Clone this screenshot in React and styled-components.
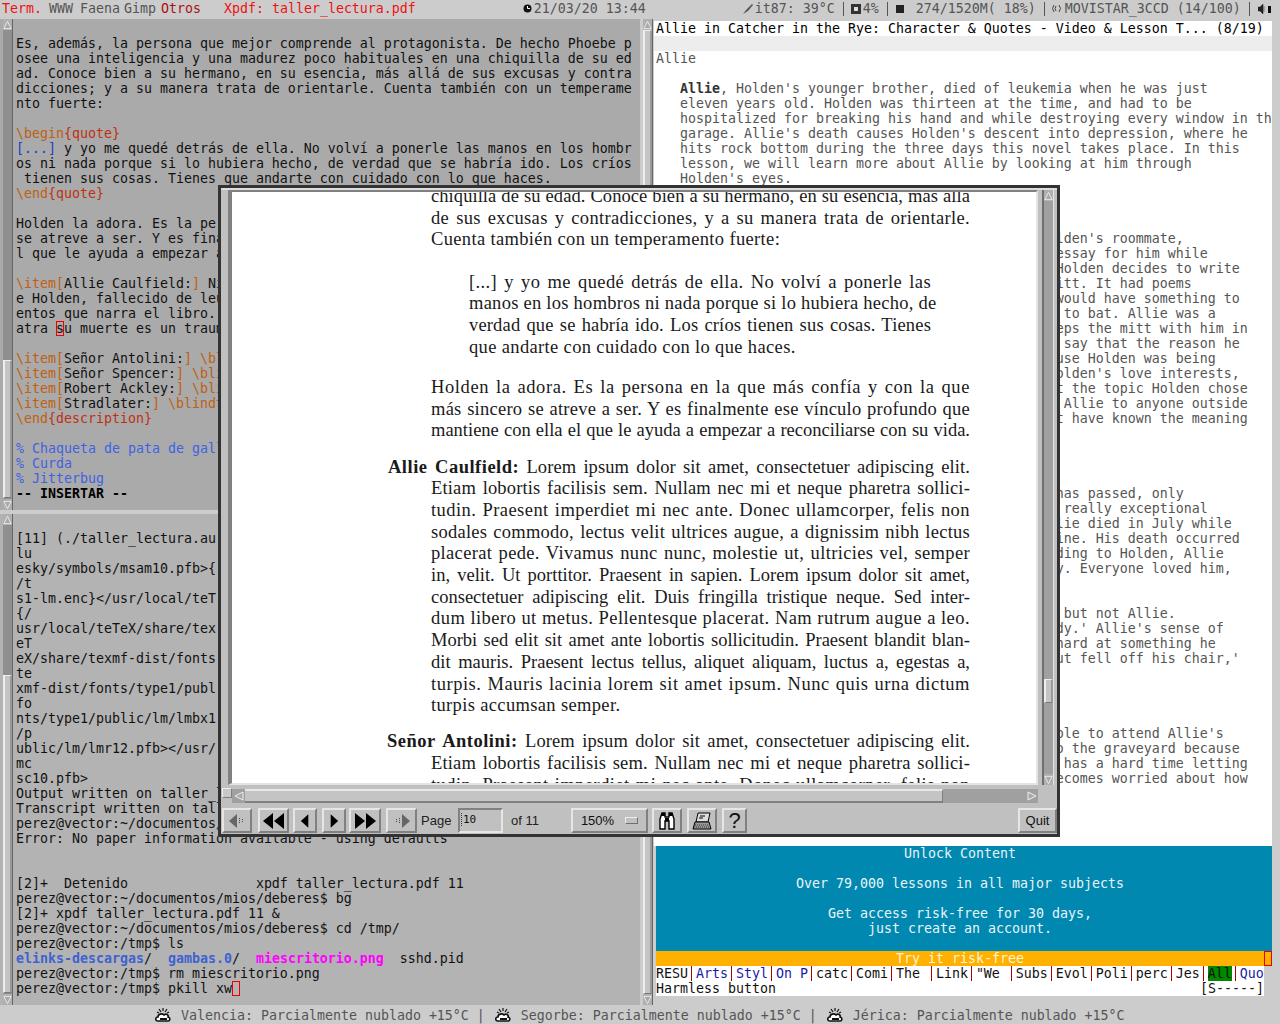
import React from 'react'
import styled, { createGlobalStyle } from 'styled-components'

const Global = createGlobalStyle`
  html, body { margin: 0; padding: 0; background: #cccccc; }
  #root { width: 1280px; height: 1024px; overflow: hidden; }
`

const MONO = `"DejaVu Sans Mono", monospace`

/*desktop*/
const Desktop = styled.div`
  position: relative;
  width: 1280px;
  height: 1024px;
  display: flex;
  flex-direction: column;
  background: #cccccc;
  overflow: hidden;
  font-family: ${MONO};
  font-size: 13.29px;
  line-height: 15px;
`
const TopBar = styled.div`
  height: 19px;
  flex: none;
  box-sizing: border-box;
  padding: 0 0 2px 2px;
  display: flex;
  align-items: center;
  color: #555555;
  white-space: pre;
`
const Tag = styled.span`
  color: ${p => p.$c || '#555555'};
  margin-left: ${p => p.$ml || 0}px;
  display: inline-flex;
  align-items: center;
`
const Pipe = styled.span`
  width: 1px;
  height: 14px;
  flex: none;
  margin-left: 8px;
  background: #555555;
`
const Columns = styled.div`
  flex: 1;
  display: flex;
  min-height: 0;
`
const LeftColumn = styled.div`
  width: 640px;
  flex: none;
  display: flex;
  flex-direction: column;
`
const Pane = styled.div`
  height: ${p => p.$h}px;
  flex: none;
  display: flex;
  background: ${p => p.$bg};
  margin-bottom: ${p => p.$mb || 0}px;
  overflow: hidden;
`
const RightColumn = styled.div`
  width: 640px;
  flex: none;
  display: flex;
`
const Code = styled.pre`
  margin: 0;
  padding-top: 17px;
  padding-left: 3px;
  font: inherit;
  color: #111111;
  white-space: pre;
  overflow: hidden;
  flex: 1;
`
const T = styled.span`
  color: ${p => p.$c};
  font-weight: ${p => (p.$b ? 'bold' : 'normal')};
`
const Cursor = styled.span`
  display: inline-block;
  width: 6px;
  height: 13px;
  vertical-align: -3px;
  border: 1px solid #ee0000;
  line-height: 13px;
`
const CursorOn = styled.span`
  outline: 1px solid #ee0000;
  outline-offset: -1px;
`

/*scrollbars*/
const Scroll = styled.div`
  width: 10px;
  flex: none;
  margin-left: 3px;
  display: flex;
  flex-direction: column;
  box-sizing: border-box;
  background: #8f8f8f;
  border-right: 1px solid #666666;
  height: ${p => p.$h}px;
`
const ScrollEnd = styled.div`
  height: 11px;
  flex: none;
  background: #b0b0b0;
  display: flex;
  align-items: center;
  justify-content: center;
`
const ScrollGap = styled.div`
  height: ${p => p.$h}px;
  flex: ${p => (p.$h ? 'none' : 1)};
`
const ScrollThumb = styled.div`
  height: ${p => p.$h}px;
  flex: none;
  background: #c4c4c4;
  border-top: 1px solid #eeeeee;
  border-left: 2px solid #eeeeee;
  border-right: 2px solid #9a9a9a;
  border-bottom: 1px solid #777777;
  box-sizing: border-box;
`
function Arrow({ up }) {
  return (
    <svg width="10" height="10" viewBox="0 0 10 10">
      <path d={up ? 'M5 1 L9 9 L1 9 Z' : 'M5 9 L9 1 L1 1 Z'} fill="#a8a8a8" stroke="#eeeeee" strokeWidth="1" />
    </svg>
  )
}
function ScrollBar({ h, gap, thumb }) {
  return (
    <Scroll $h={h}>
      <ScrollEnd><Arrow up /></ScrollEnd>
      <ScrollGap $h={gap} />
      <ScrollThumb $h={thumb} />
      <ScrollGap />
      <ScrollEnd><Arrow /></ScrollEnd>
    </Scroll>
  )
}

/*browser*/
const Browser = styled.div`
  width: 618px;
  margin-left: 1px;
  display: flex;
  flex-direction: column;
`
const TitleRow = styled.div`
  height: 15px;
  margin-top: 2px;
  background: #ffffff;
  color: #000000;
  padding-left: 2px;
  white-space: pre;
`
const Band = styled.div`
  height: 15px;
  background: #ededed;
`
const Article = styled.pre`
  margin: 0;
  height: 795px;
  padding-left: 2px;
  background: #ffffff;
  font: inherit;
  color: #555555;
  overflow: hidden;
`
const Promo = styled.div`
  height: 105px;
  margin-left: 2px;
  padding-right: 8px;
  background: #0088b0;
  color: #e8f4f8;
  text-align: center;
  white-space: pre;
`
const TryBar = styled.div`
  height: 15px;
  margin-left: 2px;
  padding-right: 8px;
  background: #ffb000;
  color: #fff4d8;
  text-align: center;
  position: relative;
`
const TryMark = styled.span`
  position: absolute;
  right: 0;
  top: 0;
  width: 8px;
  height: 15px;
  box-sizing: border-box;
  border: 1px solid #ee0000;
`
const TabRow = styled.div`
  height: 15px;
  width: 608px;
  margin-left: 2px;
  background: #ffffff;
  display: flex;
  white-space: pre;
`
const Tab = styled.span`
  color: ${p => (p.$link ? '#1a1aa8' : '#111111')};
  background: ${p => (p.$on ? '#008800' : 'transparent')};
`
const Sep = styled.span`
  width: 1px;
  margin: 0 4px 0 3px;
  flex: none;
  background: #aa0000;
`
const StatusRow = styled.div`
  height: 15px;
  width: 608px;
  margin-left: 2px;
  background: #ffffff;
  color: #111111;
  display: flex;
  justify-content: space-between;
`

/*status bar*/
const BottomBar = styled.div`
  height: 19px;
  flex: none;
  box-sizing: border-box;
  display: flex;
  align-items: center;
  padding: 1px 0 0 155px;
  color: #555555;
  white-space: pre;
`
const Weather = styled.span`
  display: inline-flex;
  align-items: center;
  margin-right: 10px;
  svg { margin-right: 10px; }
`
function Cloud() {
  return (
    <svg width="16" height="15" viewBox="0 0 16 15">
      <path d="M4 1 L6 4 M8 0 L8 3 M12 1 L10 4 M14 4 L12 5 M2 4 L4 5" stroke="#111" strokeWidth="1.2" fill="none" />
      <path d="M3 13 C0 13 0 9 3 9 C3 6 7 5 9 7 C11 5 14 7 13 9 C16 10 15 13 13 13 Z" fill="#fff" stroke="#111" strokeWidth="1.6" />
      <path d="M5 12 L12 12 L12 10 L5 10 Z" fill="#111" />
    </svg>
  )
}

/*xpdf window*/
const Xpdf = styled.div`
  position: absolute;
  left: 218px;
  top: 185px;
  width: 842px;
  height: 652px;
  box-sizing: border-box;
  border: 3px solid #333333;
  background: #c0c0c0;
  display: flex;
  flex-direction: column;
`
const ViewRow = styled.div`
  display: flex;
  height: 597px;
  flex: none;
  border-top: 2px solid #dddddd;
  padding-left: 7px;
`
const Sunken = styled.div`
  width: 810px;
  height: 595px;
  flex: none;
  box-sizing: border-box;
  border-top: 2px solid #808080;
  border-left: 4px solid #808080;
  border-right: 2px solid #e4e4e4;
  border-bottom: 2px solid #e4e4e4;
  background: #ffffff;
  overflow: hidden;
`
const VScroll = styled.div`
  width: 12px;
  height: 595px;
  margin-left: 4px;
  flex: none;
  display: flex;
  flex-direction: column;
  background: #a0a0a0;
  border-left: 2px solid #707070;
  border-right: 1px solid #e4e4e4;
  box-sizing: border-box;
`
const HScroll = styled.div`
  height: 14px;
  width: 816px;
  margin: 2px 0 0 1px;
  flex: none;
  display: flex;
  background: #c0c0c0;
`
const Sash = styled.div`
  width: 10px;
  height: 10px;
  flex: none;
  margin-top: -1px;
  box-sizing: border-box;
  background: #c8c8c8;
  border: 1px solid;
  border-color: #eeeeee #808080 #808080 #eeeeee;
`
const HEnd = styled.div`
  width: 13px;
  flex: none;
  background: #a0a0a0;
  display: flex;
  align-items: center;
  justify-content: center;
`
const HThumb = styled.div`
  width: 698px;
  flex: none;
  box-sizing: border-box;
  background: #c4c4c4;
  border-top: 2px solid #e8e8e8;
  border-bottom: 2px solid #808080;
  border-right: 1px solid #808080;
`
const HRest = styled.div`
  flex: 1;
  background: #a0a0a0;
`
const Toolbar = styled.div`
  flex: 1;
  display: flex;
  align-items: center;
  padding: 4px 0 0 1px;
`
const Btn = styled.button`
  width: ${p => p.$w}px;
  height: 25px;
  flex: none;
  padding: 0;
  margin: 0 0 0 ${p => p.$ml || 0}px;
  box-sizing: border-box;
  background: #c0c0c0;
  border: 2px solid;
  border-color: #e6e6e6 #808080 #808080 #e6e6e6;
  font-family: "Liberation Sans", sans-serif;
  font-size: ${p => p.$fs || 13}px;
  color: #111111;
  display: flex;
  align-items: center;
  justify-content: center;
`
const Label = styled.span`
  font-family: "Liberation Sans", sans-serif;
  font-size: 13px;
  color: #222222;
  flex: none;
  width: ${p => p.$w}px;
  margin-left: ${p => p.$ml || 0}px;
`
const PageInput = styled.div`
  width: 45px;
  height: 25px;
  flex: none;
  box-sizing: border-box;
  border: 2px solid;
  border-color: #808080 #e6e6e6 #e6e6e6 #808080;
  font-family: ${MONO};
  font-size: 11px;
  line-height: 19px;
  padding-left: 1px;
  color: #111111;
  span {
    border-left: 1px dotted #333333;
    padding-left: 1px;
  }
`
const ZoomMark = styled.span`
  width: 11px;
  height: 5px;
  margin-left: 11px;
  background: #c0c0c0;
  border: 1px solid;
  border-color: #eeeeee #707070 #707070 #eeeeee;
`

/*pdf text*/
const PdfPage = styled.div`
  width: 804px;
  margin-top: -6px;
  font-family: "Liberation Serif", serif;
  font-size: 18.5px;
  line-height: 21.7px;
  color: #1a1a1a;
`
const Para = styled.div`
  margin-top: ${p => p.$mt || 0}px;
  margin-left: ${p => p.$ml}px;
  width: ${p => p.$w}px;
`
const Line = styled.div`
  white-space: nowrap;
  text-align: justify;
  text-align-last: ${p => (p.$last ? 'left' : 'justify')};
  margin-left: ${p => p.$hang || 0}px;
  letter-spacing: ${p => p.$ls}px;
`
const Lead = styled.b`
  letter-spacing: 0.5px;
`

// Computer Modern runs wider than Liberation Serif: spread short lines a little
function L({ t, w = 539, last }) {
  const ls = last ? 0.35 : Math.max(0, Math.min(0.6, (w / t.length - 7.5) * 0.8))
  return <Line $ls={ls.toFixed(2)} $last={last}>{t}</Line>
}

const vim = (
  <>
    {`Es, además, la persona que mejor comprende al protagonista. De hecho Phoebe p
osee una inteligencia y una madurez poco habituales en una chiquilla de su ed
ad. Conoce bien a su hermano, en su esencia, más allá de sus excusas y contra
dicciones; y a su manera trata de orientarle. Cuenta también con un temperame
nto fuerte:

`}
    <T $c="#c06010">{'\\begin'}</T><T $c="#c03010">{'{quote}'}</T>{`
`}
    <T $c="#2040c0">[...]</T>{` y yo me quedé detrás de ella. No volví a ponerle las manos en los hombr
os ni nada porque si lo hubiera hecho, de verdad que se habría ido. Los críos
 tienen sus cosas. Tienes que andarte con cuidado con lo que haces.
`}
    <T $c="#c06010">{'\\end'}</T><T $c="#c03010">{'{quote}'}</T>{`

Holden la adora. Es la persona en la que más confía y con la que más sincero
se atreve a ser. Y es finalmente ese vínculo profundo que mantiene con ella e
l que le ayuda a empezar a reconciliarse con su vida.

`}
    <T $c="#c06010">{'\\item'}</T><T $c="#c06010">[</T>Allie Caulfield:<T $c="#c06010">]</T>{` Niño pequeño y hermano d
e Holden, fallecido de leucemia antes de los acontecimi
entos que narra el libro.
atra `}<CursorOn>s</CursorOn>{`u muerte es un trauma.

`}
    <T $c="#c06010">{'\\item'}</T><T $c="#c06010">[</T>Señor Antolini:<T $c="#c06010">]</T> <T $c="#c06010">{'\\blindtext'}</T>{`
`}
    <T $c="#c06010">{'\\item'}</T><T $c="#c06010">[</T>Señor Spencer:<T $c="#c06010">]</T> <T $c="#c06010">{'\\blindtext'}</T>{`
`}
    <T $c="#c06010">{'\\item'}</T><T $c="#c06010">[</T>Robert Ackley:<T $c="#c06010">]</T> <T $c="#c06010">{'\\blindtext'}</T>{`
`}
    <T $c="#c06010">{'\\item'}</T><T $c="#c06010">[</T>Stradlater:<T $c="#c06010">]</T> <T $c="#c06010">{'\\blindtext'}</T>{`
`}
    <T $c="#c06010">{'\\end'}</T><T $c="#c03010">{'{description}'}</T>{`

`}
    <T $c="#3f62e0">{`% Chaqueta de pata de gallo
% Curda
% Jitterbug`}</T>{`
`}
    <T $c="#000000" $b>-- INSERTAR --</T>
  </>
)

const terminal = (
  <>
    {`[11] (./taller_lectura.au
lu
esky/symbols/msam10.pfb>{
/t
s1-lm.enc}</usr/local/teT
{/
usr/local/teTeX/share/tex
eT
eX/share/texmf-dist/fonts
te
xmf-dist/fonts/type1/publ
fo
nts/type1/public/lm/lmbx1
/p
ublic/lm/lmr12.pfb></usr/
mc
sc10.pfb>
Output written on taller_lectura.pdf
Transcript written on taller_lectura.log
perez@vector:~/documentos/mios/deberes$ xpdf
Error: No paper information available - using defaults


[2]+  Detenido                xpdf taller_lectura.pdf 11
perez@vector:~/documentos/mios/deberes$ bg
[2]+ xpdf taller_lectura.pdf 11 &
perez@vector:~/documentos/mios/deberes$ cd /tmp/
perez@vector:/tmp$ ls
`}
    <T $c="#3f62d0" $b>elinks-descargas</T>{'/  '}
    <T $c="#3f62d0" $b>gambas.0</T>{'/  '}
    <T $c="#ff00ff" $b>miescritorio.png</T>{`  sshd.pid
perez@vector:/tmp$ rm miescritorio.png
perez@vector:/tmp$ pkill xw`}
    <Cursor />
  </>
)

// lines whose start is hidden by the xpdf window, col counted from the indent
const tail = (col, text) => ' '.repeat(col + 3) + text

const bodyText = [
  '   eleven years old. Holden was thirteen at the time, and had to be',
  '   hospitalized for breaking his hand and while destroying every window in the',
  "   garage. Allie's death causes Holden's descent into depression, where he",
  '   hits rock bottom during the three days this novel takes place. In this',
  '   lesson, we will learn more about Allie by looking at him through',
  "   Holden's eyes.",
  '', '', '',
  tail(47, "lden's roommate,"),
  tail(47, 'essay for him while'),
  tail(47, 'Holden decides to write'),
  tail(47, 'itt. It had poems'),
  tail(47, 'would have something to'),
  tail(48, 'to bat. Allie was a'),
  tail(47, 'eps the mitt with him in'),
  tail(48, 'say that the reason he'),
  tail(47, 'use Holden was being'),
  tail(47, "olden's love interests,"),
  tail(47, 't the topic Holden chose'),
  tail(48, 'Allie to anyone outside'),
  tail(47, 't have known the meaning'),
  '', '', '', '',
  tail(47, 'has passed, only'),
  tail(48, 'really exceptional'),
  tail(47, 'lie died in July while'),
  tail(47, 'ine. His death occurred'),
  tail(47, 'ding to Holden, Allie'),
  tail(47, 'y. Everyone loved him,'),
  '', '',
  tail(48, 'but not Allie.'),
  tail(47, "dy.' Allie's sense of"),
  tail(47, 'hard at something he'),
  tail(47, "ut fell off his chair,'"),
  '', '', '', '',
  tail(47, "ble to attend Allie's"),
  tail(47, 'o the graveyard because'),
  tail(48, 'has a hard time letting'),
  tail(47, 'ecomes worried about how'),
]

const tabs = [
  ['RESU'], ['Arts', 1], ['Styl', 1], ['On P', 1], ['catc'], ['Comi'], ['The '], ['Link'],
  ['"We '], ['Subs'], ['Evol'], ['Poli'], ['perc'], ['Jes'], ['All', 0, 1], ['Quo', 1],
]

function Triangles({ kind }) {
  // toolbar arrows, drawn on a 24x20 box
  const shapes = {
    first: (
      <>
        <path d="M4 10 L12 3 L12 17 Z" fill="#666" />
        <path d="M14.5 7 V13 M17.5 8 V12" stroke="#444" strokeDasharray="1 1" />
      </>
    ),
    rew: <path d="M1 10 L11 2 L11 18 Z M12 10 L22 2 L22 18 Z" fill="#000" />,
    prev: <path d="M7 10 L16 2 L16 18 Z" fill="#000" />,
    next: <path d="M8 2 L17 10 L8 18 Z" fill="#000" />,
    ff: <path d="M2 2 L12 10 L2 18 Z M13 2 L23 10 L13 18 Z" fill="#000" />,
    last: (
      <>
        <path d="M6.5 8 V12 M9.5 7 V13" stroke="#444" strokeDasharray="1 1" />
        <path d="M12 3 L20 10 L12 17 Z" fill="#666" />
      </>
    ),
  }
  return <svg width="24" height="20" viewBox="0 0 24 20">{shapes[kind]}</svg>
}

function Binoculars() {
  return (
    <svg width="20" height="20" viewBox="0 0 20 20">
      <path d="M3 8 L5 2 H8 V6 H12 V2 H15 L17 8 V18 H12 V10 H8 V18 H3 Z" fill="#fff" stroke="#000" strokeWidth="1.4" />
      <path d="M4 2 H8 V5 H4 Z M12 2 H16 V5 H12 Z M8 7 H12 V10 H8 Z" fill="#000" />
    </svg>
  )
}

function Printer() {
  return (
    <svg width="20" height="20" viewBox="0 0 20 20">
      <path d="M6 2 H18 L16 11 H4 Z" fill="#ddd" stroke="#000" />
      <path d="M8 5 H13 M7 7 H11" stroke="#000" />
      <path d="M3 11 H17 L19 18 H1 Z" fill="#999" stroke="#000" />
      <path d="M3 14 H17 M2 16 H18" stroke="#333" strokeDasharray="1 1" />
    </svg>
  )
}

function App() {
  return (
    <Desktop>
      <Global />
      <TopBar>
        <Tag $c="#ee1111">Term.</Tag>
        <Tag $ml={7}>WWW</Tag>
        <Tag $ml={7}>Faena</Tag>
        <Tag $ml={4}>Gimp</Tag>
        <Tag $c="#aa1010" $ml={5}>Otros</Tag>
        <Tag $c="#ee1111" $ml={23}>Xpdf: taller_lectura.pdf</Tag>
        <Tag $c="#111111" $ml={107}>
          <svg width="9" height="9" viewBox="0 0 9 9"><circle cx="4.5" cy="4.5" r="4" fill="#111" /><path d="M4.5 2 V4.5 H7" stroke="#fff" fill="none" /></svg>
        </Tag>
        <Tag $ml={2}>21/03/20 13:44</Tag>
        <Tag $c="#333333" $ml={96}>
          <svg width="12" height="12" viewBox="0 0 12 12"><path d="M1 11 L4 7 L10 1 L11 2 L6 8 Z" fill="#555" /></svg>
        </Tag>
        <Tag $ml={1}>it87: 39°C</Tag>
        <Pipe />
        <Tag $ml={7}>
          <svg width="10" height="10" viewBox="0 0 10 10"><rect width="10" height="10" fill="#333" /><rect x="3" y="3" width="4" height="4" fill="#ddd" /></svg>
        </Tag>
        <Tag $ml={2}>4%</Tag>
        <Pipe />
        <Tag $ml={8}>
          <svg width="8" height="10" viewBox="0 0 8 10"><rect y="1" width="8" height="8" fill="#222" /></svg>
        </Tag>
        <Tag $ml={12}>274/1520M( 18%)</Tag>
        <Pipe />
        <Tag $ml={7}>
          <svg width="9" height="9" viewBox="0 0 9 9"><path d="M2 1 L0.5 4.5 L2 8 M4 2 L3 4.5 L4 7 M7 1 L8.5 4.5 L7 8" stroke="#444" fill="none" /></svg>
        </Tag>
        <Tag $ml={4}>MOVISTAR_3CCD (14/100)</Tag>
        <Pipe />
        <Tag $c="#111111" $ml={8}>
          <svg width="14" height="10" viewBox="0 0 14 10"><path d="M0 3 H2 L5 0 V10 L2 7 H0 Z M6 2 V8" fill="#222" stroke="#222" strokeWidth="0.5" /><rect x="10" y="2" width="3" height="7" fill="#111" /></svg>
        </Tag>
      </TopBar>

      <Columns>
        <LeftColumn>
          <Pane $h={491} $bg="#aaaaaa" $mb={4}>
            <ScrollBar h={491} gap={330} thumb={138} />
            <Code>{vim}</Code>
          </Pane>
          <Pane $h={491} $bg="#b3b3b3">
            <ScrollBar h={491} gap={150} thumb={318} />
            <Code>{terminal}</Code>
          </Pane>
        </LeftColumn>
        <RightColumn>
          <ScrollBar h={986} gap={0} thumb={964} />
          <Browser>
            <TitleRow>Allie in Catcher in the Rye: Character &amp; Quotes - Video &amp; Lesson T... (8/19)</TitleRow>
            <Band />
            <Article>
              {'Allie\n\n   '}
              <T $c="#333333" $b>Allie</T>
              {", Holden's younger brother, died of leukemia when he was just\n"}
              {bodyText.join('\n')}
            </Article>
            <Promo>
              {'Unlock Content\n\nOver 79,000 lessons in all major subjects\n\nGet access risk-free for 30 days,\njust create an account.'}
            </Promo>
            <TryBar>Try it risk-free<TryMark /></TryBar>
            <TabRow>
              {tabs.map(([label, link, on], i) => (
                <React.Fragment key={i}>
                  <Tab $link={link} $on={on}>{label}</Tab>
                  {i < tabs.length - 1 && <Sep />}
                </React.Fragment>
              ))}
            </TabRow>
            <StatusRow>
              <span>Harmless button</span>
              <span>[S-----]</span>
            </StatusRow>
          </Browser>
        </RightColumn>
      </Columns>

      <BottomBar>
        <Weather><Cloud />Valencia: Parcialmente nublado +15°C |</Weather>
        <Weather><Cloud />Segorbe: Parcialmente nublado +15°C |</Weather>
        <Weather><Cloud />Jérica: Parcialmente nublado +15°C</Weather>
      </BottomBar>

      <Xpdf>
        <ViewRow>
          <Sunken>
            <PdfPage>
              <Para $ml={199} $w={539}>
                <L t="chiquilla de su edad. Conoce bien a su hermano, en su esencia, más allá" />
                <L t="de sus excusas y contradicciones, y a su manera trata de orientarle." />
                <L t="Cuenta también con un temperamento fuerte:" last />
              </Para>
              <Para $ml={237} $w={462} $mt={20.5}>
                <L w={462} t="[...] y yo me quedé detrás de ella. No volví a ponerle las" />
                <L w={462} t="manos en los hombros ni nada porque si lo hubiera hecho, de" />
                <L w={462} t="verdad que se habría ido. Los críos tienen sus cosas. Tienes" />
                <L w={462} t="que andarte con cuidado con lo que haces." last />
              </Para>
              <Para $ml={199} $w={539} $mt={18.5}>
                <L t="Holden la adora. Es la persona en la que más confía y con la que" />
                <L t="más sincero se atreve a ser. Y es finalmente ese vínculo profundo que" />
                <L t="mantiene con ella el que le ayuda a empezar a reconciliarse con su vida." />
              </Para>
              <Para $ml={199} $w={539} $mt={14.5}>
                <Line $hang={-43} $ls={0.1}><Lead>Allie Caulfield:</Lead> Lorem ipsum dolor sit amet, consectetuer adipiscing elit.</Line>
                <L t="Etiam lobortis facilisis sem. Nullam nec mi et neque pharetra sollici-" />
                <L t="tudin. Praesent imperdiet mi nec ante. Donec ullamcorper, felis non" />
                <L t="sodales commodo, lectus velit ultrices augue, a dignissim nibh lectus" />
                <L t="placerat pede. Vivamus nunc nunc, molestie ut, ultricies vel, semper" />
                <L t="in, velit. Ut porttitor. Praesent in sapien. Lorem ipsum dolor sit amet," />
                <L t="consectetuer adipiscing elit. Duis fringilla tristique neque. Sed inter-" />
                <L t="dum libero ut metus. Pellentesque placerat. Nam rutrum augue a leo." />
                <L t="Morbi sed elit sit amet ante lobortis sollicitudin. Praesent blandit blan-" />
                <L t="dit mauris. Praesent lectus tellus, aliquet aliquam, luctus a, egestas a," />
                <L t="turpis. Mauris lacinia lorem sit amet ipsum. Nunc quis urna dictum" />
                <L t="turpis accumsan semper." last />
              </Para>
              <Para $ml={199} $w={539} $mt={14.5}>
                <Line $hang={-44} $ls={0.1}><Lead>Señor Antolini:</Lead> Lorem ipsum dolor sit amet, consectetuer adipiscing elit.</Line>
                <L t="Etiam lobortis facilisis sem. Nullam nec mi et neque pharetra sollici-" />
                <L t="tudin. Praesent imperdiet mi nec ante. Donec ullamcorper, felis non" />
              </Para>
            </PdfPage>
          </Sunken>
          <VScroll>
            <ScrollEnd><Arrow up /></ScrollEnd>
            <ScrollGap $h={478} />
            <ScrollThumb $h={24} />
            <ScrollGap />
            <ScrollEnd><Arrow /></ScrollEnd>
          </VScroll>
        </ViewRow>
        <HScroll>
          <Sash />
          <HEnd>
            <svg width="10" height="10" viewBox="0 0 10 10"><path d="M1 5 L9 1 L9 9 Z" fill="#a8a8a8" stroke="#eee" /></svg>
          </HEnd>
          <HThumb />
          <HRest />
          <HEnd>
            <svg width="10" height="10" viewBox="0 0 10 10"><path d="M9 5 L1 1 L1 9 Z" fill="#a8a8a8" stroke="#eee" /></svg>
          </HEnd>
        </HScroll>
        <Toolbar>
          <Btn $w={30}><Triangles kind="first" /></Btn>
          <Btn $w={31} $ml={6}><Triangles kind="rew" /></Btn>
          <Btn $w={24} $ml={4}><Triangles kind="prev" /></Btn>
          <Btn $w={24} $ml={5}><Triangles kind="next" /></Btn>
          <Btn $w={32} $ml={3}><Triangles kind="ff" /></Btn>
          <Btn $w={31} $ml={5}><Triangles kind="last" /></Btn>
          <Label $w={37} $ml={4}>Page</Label>
          <PageInput><span>10</span></PageInput>
          <Label $w={60} $ml={8}>of 11</Label>
          <Btn $w={77}>150%<ZoomMark /></Btn>
          <Btn $w={30} $ml={4}><Binoculars /></Btn>
          <Btn $w={30} $ml={5}><Printer /></Btn>
          <Btn $w={25} $ml={5} $fs={22}>?</Btn>
          <Btn $w={39} $ml={271}>Quit</Btn>
        </Toolbar>
      </Xpdf>
    </Desktop>
  )
}

export default App
